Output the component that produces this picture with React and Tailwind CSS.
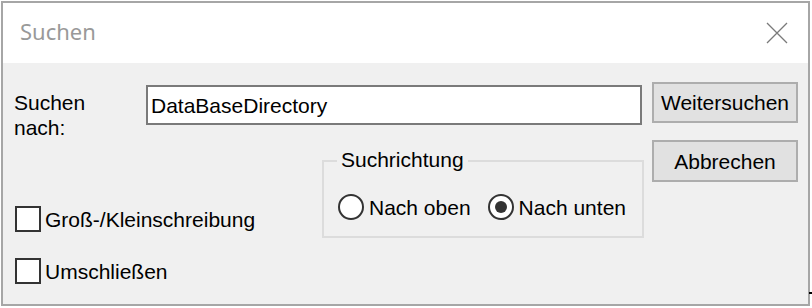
import React, { useState } from 'react'

const Checkbox = ({ label, checked, onChange }) => (
    <label className="flex items-center gap-[4px] cursor-default">
        <span
            className="w-[26px] h-[26px] border-2 border-[#333333] bg-white flex items-center justify-center"
            onClick={onChange}
        >
            {checked && <span className="w-[12px] h-[12px] bg-[#333333]" />}
        </span>
        <span>{label}</span>
    </label>
)

const Radio = ({ label, checked, onChange }) => (
    <label className="flex items-center gap-[5px] cursor-default" onClick={onChange}>
        <span className="w-[26px] h-[26px] rounded-full border-2 border-[#333333] bg-white flex items-center justify-center">
            {checked && <span className="w-[12px] h-[12px] rounded-full bg-[#333333]" />}
        </span>
        <span>{label}</span>
    </label>
)

const App = () => {
    // State des Dialogs
    const [suchtext, setSuchtext] = useState('DataBaseDirectory')
    const [grossKlein, setGrossKlein] = useState(false)
    const [umschliessen, setUmschliessen] = useState(false)
    const [richtung, setRichtung] = useState('unten')

    return (
        <div className="relative w-[812px] h-[308px] bg-white">
            <div className="ml-[1px] pt-[1px]">
                <div className="w-[809px] h-[305px] border-2 border-[#a6a6a6] flex flex-col">
                    {/* Titelleiste */}
                    <div className="h-[60px] bg-white flex items-start">
                        <span className="ml-[17px] mt-[13px] text-[22px] leading-[30px] text-[#999999] font-['Noto_Sans',sans-serif]">
                            Suchen
                        </span>
                        <svg className="ml-auto mr-[20px] mt-[19px]" width="22" height="22" viewBox="0 0 22 22">
                            <path d="M1 1 L21 21 M21 1 L1 21" stroke="#7a7a7a" strokeWidth="1.3" fill="none" />
                        </svg>
                    </div>

                    {/* Inhalt */}
                    <div className="flex-1 bg-[#f0f0f0] flex pl-[11px] text-[21px] leading-[25px] text-black font-['Liberation_Sans',Arial,sans-serif]">
                        <div className="w-[630px] flex flex-col">
                            <div className="h-[62px] flex items-start">
                                <div className="w-[132px] mt-[27px]">
                                    Suchen<br />nach:
                                </div>
                                <input
                                    type="text"
                                    className="mt-[22px] w-[496px] h-[40px] border-2 border-[#7a7a7a] bg-white pl-[3px] pt-[1px] outline-none"
                                    value={suchtext}
                                    onChange={e => setSuchtext(e.target.value)}
                                />
                            </div>

                            <div className="flex items-start">
                                <div className="w-[307px] ml-[1px] mt-[81px] flex flex-col gap-[26px]">
                                    <Checkbox
                                        label="Groß-/Kleinschreibung"
                                        checked={grossKlein}
                                        onChange={() => setGrossKlein(!grossKlein)}
                                    />
                                    <Checkbox
                                        label="Umschließen"
                                        checked={umschliessen}
                                        onChange={() => setUmschliessen(!umschliessen)}
                                    />
                                </div>

                                <div className="relative mt-[35px] w-[322px] h-[78px] border-2 border-[#dcdcdc] pl-[14px] pt-[32px]">
                                    <span className="absolute left-[13px] top-[-15px] px-[4px] bg-[#f0f0f0]">
                                        Suchrichtung
                                    </span>
                                    <div className="flex items-center gap-[17px]">
                                        <Radio
                                            label="Nach oben"
                                            checked={richtung === 'oben'}
                                            onChange={() => setRichtung('oben')}
                                        />
                                        <Radio
                                            label="Nach unten"
                                            checked={richtung === 'unten'}
                                            onChange={() => setRichtung('unten')}
                                        />
                                    </div>
                                </div>
                            </div>
                        </div>

                        <div className="ml-[8px] flex flex-col">
                            <button
                                type="button"
                                className="mt-[19px] w-[146px] h-[41px] border-2 border-[#adadad] bg-[#e1e1e1] text-center"
                            >
                                Weitersuchen
                            </button>
                            <button
                                type="button"
                                className="mt-[17px] w-[146px] h-[42px] border-2 border-[#adadad] bg-[#e1e1e1] text-center"
                            >
                                Abbrechen
                            </button>
                        </div>
                    </div>
                </div>
            </div>
            <span className="absolute left-[809px] top-[292px] w-[3px] h-[2px] bg-black" />
        </div>
    )
}

export default App
